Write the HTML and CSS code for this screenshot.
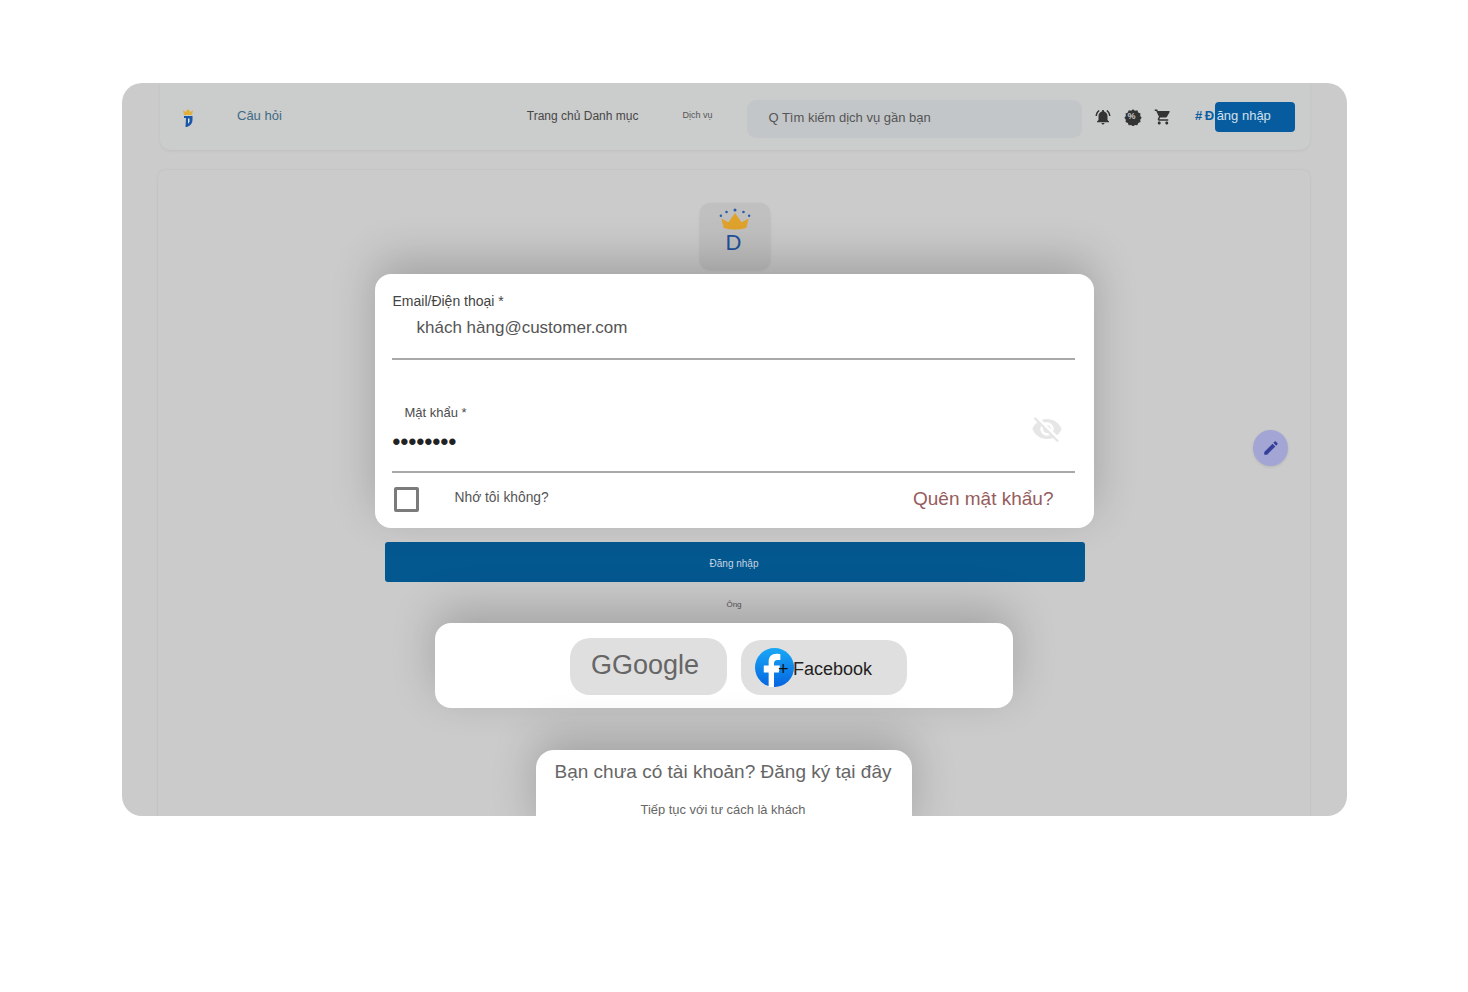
FILE: index.html
```html
<!DOCTYPE html>
<html lang="vi">

<head>
    <meta charset="UTF-8">
    <title>Đăng nhập</title>
    <link rel="stylesheet" href="styles.css">
</head>

<body>
    <div class="frame">
        <div class="nav">
            <svg class="nav-logo" viewBox="0 0 12 20">
                <path d="M2 7 1 2l2.500 2L6 1l2.500 3L11 2l-1 5z" fill="#e0b13c" />
                <path d="M2 8h8.500v4q0 5-5.500 7H3.500l.5-9H2z" fill="#1a58a5" />
                <path d="M6 10.500h1.500v3L6 16z" fill="#dfe4ea" />
            </svg>
            <span class="nav-faq">Câu hỏi</span>
            <span class="nav-home">Trang chủ Danh mục</span>
            <span class="nav-service">Dịch vụ</span>
            <div class="search">Q Tìm kiếm dịch vụ gần bạn</div>
            <svg class="nav-icon" viewBox="0 0 24 24">
                <path d="M7.580 4.080 6.150 2.650C3.750 4.480 2.170 7.300 2.030 10.500h2c.15-2.650 1.510-4.970 3.550-6.420zm12.390 6.420h2c-.15-3.200-1.730-6.020-4.120-7.850l-1.420 1.430c2.020 1.450 3.390 3.770 3.540 6.420zM18 11c0-3.070-1.640-5.640-4.500-6.320V4c0-.83-.67-1.500-1.500-1.500s-1.500.67-1.500 1.500v.68C7.630 5.360 6 7.920 6 11v5l-2 2v1h16v-1l-2-2v-5zm-6 11c.14 0 .27-.01.4-.04.65-.14 1.180-.58 1.440-1.180.1-.24.15-.5.15-.78h-4c.01 1.100.9 2 2.010 2z" />
            </svg>
            <div class="nav-badge">
                <svg class="nav-icon" viewBox="0 0 24 24">
                    <path d="m12 1.500 2.600 2 3.200-.4 1.200 3 3 1.200-.4 3.200 2 2.500-2 2.600.4 3.200-3 1.200-1.200 3-3.200-.4-2.600 2-2.500-2-3.200.4-1.200-3-3-1.200.4-3.200-2-2.600 2-2.500-.4-3.200 3-1.200 1.200-3 3.200.4z" />
                </svg>
                <span>%</span>
            </div>
            <svg class="nav-icon" viewBox="0 0 24 24">
                <path d="M7 18c-1.100 0-1.990.9-1.990 2S5.900 22 7 22s2-.9 2-2-.9-2-2-2zM1 2v2h2l3.600 7.590-1.350 2.450c-.16.28-.25.61-.25.96 0 1.100.9 2 2 2h12v-2H7.420c-.14 0-.25-.11-.25-.25l.03-.12.9-1.830h7.450c.75 0 1.410-.41 1.750-1.030l3.580-6.470c.08-.12.12-.28.12-.38 0-.55-.45-1-1-1H5.210l-.94-2H1zm16 16c-1.100 0-1.990.9-1.990 2s.89 2 1.990 2 2-.9 2-2-.9-2-2-2z" />
            </svg>
            <a class="nav-login"><span class="nav-hash">#Đ</span>ăng nhập</a>
        </div>

        <div class="panel">
            <div class="logo-tile">
                <svg class="crown" viewBox="0 0 34 24">
                    <path d="M5 21 2.500 11 10 15l7-10 7 10 7.500-4L29 21q-12 3.500-24 0z" fill="#e0a32c" />
                    <circle cx="17" cy="1.800" r="1.600" fill="#2a5da8" />
                    <circle cx="8" cy="4" r="1.400" fill="#2a5da8" />
                    <circle cx="26" cy="4" r="1.400" fill="#2a5da8" />
                    <circle cx="2" cy="8" r="1.300" fill="#2a5da8" />
                    <circle cx="32" cy="8" r="1.300" fill="#2a5da8" />
                </svg>
                <span class="logo-letter">D</span>
            </div>

            <form class="card login-card">
                <label class="email-label">Email/Điện thoại *</label>
                <div class="email-value">khách hàng@customer.com</div>
                <hr class="line">
                <label class="pass-label">Mật khẩu *</label>
                <div class="pass-row">
                    <span class="pass-dots">••••••••</span>
                    <svg class="eye" viewBox="0 0 24 24">
                        <path d="M12 7c2.760 0 5 2.240 5 5 0 .65-.13 1.260-.36 1.830l2.920 2.920c1.510-1.260 2.700-2.890 3.430-4.750-1.730-4.390-6-7.500-11-7.500-1.400 0-2.740.25-3.980.7l2.160 2.160C10.740 7.130 11.350 7 12 7zM2 4.270l2.280 2.280.46.46C3.080 8.300 1.780 10.020 1 12c1.730 4.390 6 7.500 11 7.500 1.550 0 3.030-.3 4.380-.84l.42.42L19.730 22 21 20.730 3.270 3 2 4.270zM7.530 9.800l1.550 1.550c-.05.21-.08.43-.08.65 0 1.660 1.340 3 3 3 .22 0 .44-.03.65-.08l1.550 1.550c-.67.33-1.410.53-2.200.53-2.760 0-5-2.240-5-5 0-.79.2-1.530.53-2.200zm4.310-.78 3.150 3.150.02-.16c0-1.660-1.340-3-3-3l-.17.01z" />
                    </svg>
                </div>
                <hr class="line">
                <div class="remember-row">
                    <span class="checkbox"></span>
                    <span class="remember">Nhớ tôi không?</span>
                    <a class="forgot">Quên mật khẩu?</a>
                </div>
            </form>

            <button class="submit">Đăng nhập</button>
            <div class="or-text">Ông</div>

            <div class="card social-card">
                <button class="social google">GGoogle</button>
                <button class="social facebook">
                    <svg class="fb" viewBox="0 0 40 40">
                        <defs>
                            <linearGradient id="fbblue" x1="0" y1="0" x2="0" y2="1">
                                <stop offset="0" stop-color="#19a8f6" />
                                <stop offset="1" stop-color="#0465e0" />
                            </linearGradient>
                        </defs>
                        <circle cx="20" cy="20" r="20" fill="url(#fbblue)" />
                        <path d="M14 40V25H9v-7h5v-4c0-5 3-8 8-8 2 0 4 .3 4 .3v6h-3c-2.500 0-3.500 1.500-3.500 3.200V18h6l-1 7h-5v15q-3 .5-5.500 0z" fill="#fff" />
                    </svg>
                    <span class="fb-plus">+</span>
                    <span class="fb-label">Facebook</span>
                </button>
            </div>

            <div class="card signup-card">
                <div class="signup">Bạn chưa có tài khoản? Đăng ký tại đây</div>
                <div class="guest">Tiếp tục với tư cách là khách</div>
            </div>
        </div>

        <button class="fab">
            <svg viewBox="0 0 24 24">
                <path d="M3 17.250V21h3.750L17.810 9.940l-3.750-3.750L3 17.250zM20.710 7.040c.39-.39.39-1.020 0-1.410l-2.340-2.340c-.39-.39-1.020-.39-1.410 0l-1.830 1.830 3.750 3.750 1.830-1.830z" />
            </svg>
        </button>
    </div>
</body>

</html>
```

FILE: styles.css
```css
* {
    margin: 0;
    padding: 0;
    box-sizing: border-box;
    font-family: "Liberation Sans", Arial, sans-serif;
}

body {
    background-color: #fff;
}

.frame {
    position: relative;
    width: 1225px;
    height: 733px;
    margin: 83px 0 0 122px;
    background-color: #cbcbcb;
    border-radius: 20px;
    overflow: hidden;
}

/* top bar */
.nav {
    display: flex;
    align-items: center;
    width: 1150px;
    height: 67px;
    margin-left: 38px;
    padding: 0 15px 0 22px;
    background-color: #cbcccc;
    border-radius: 0 0 10px 10px;
    box-shadow: 0 1px 3px rgba(0, 0, 0, 0.06);
}

.nav-logo {
    width: 12px;
    height: 20px;
    margin-top: 3px;
}

.nav-faq {
    margin: -2px 0 0 43px;
    font-size: 13px;
    color: #3f6a85;
}

.nav-home {
    margin: -2px 0 0 245px;
    font-size: 12px;
    color: #474747;
}

.nav-service {
    margin: -4px 0 0 44px;
    font-size: 9px;
    color: #555;
}

.search {
    display: flex;
    align-items: center;
    width: 335px;
    height: 38px;
    margin: 4px 12px 0 35px;
    padding: 0 0 2px 21px;
    font-size: 13px;
    color: #555;
    background-color: #c3c6c8;
    border-radius: 9px;
}

.nav-icon {
    display: block;
    width: 18px;
    height: 18px;
    fill: #333;
}

.nav-badge {
    position: relative;
    margin: 0 12px;
}

.nav-badge span {
    position: absolute;
    top: 3px;
    left: 3px;
    font-size: 9px;
    font-weight: 700;
    color: #cbcbcb;
}

.nav-login {
    display: block;
    width: 80px;
    height: 30px;
    margin: 1px 0 0 auto;
    font-size: 13px;
    line-height: 28px;
    text-indent: -20px;
    white-space: nowrap;
    color: #d3e0ea;
    background-color: #075c9f;
    border-radius: 4px;
}

.nav-hash {
    letter-spacing: 2.500px;
    font-weight: 700;
    color: #0a5da0;
}

/* main panel */
.panel {
    display: flex;
    flex-direction: column;
    align-items: center;
    width: 1152px;
    height: 660px;
    margin: 20px 0 0 36px;
    padding-top: 33px;
    background-color: #cbcbcb;
    border-radius: 8px 8px 0 0;
    box-shadow: 0 0 3px rgba(0, 0, 0, 0.08);
}

.panel > * {
    flex-shrink: 0;
}

.logo-tile {
    display: flex;
    flex-direction: column;
    align-items: center;
    width: 70px;
    height: 66px;
    margin: 0 0 5px 2px;
    padding-top: 5px;
    background-color: #c0c0c0;
    border-radius: 10px;
    box-shadow: 0 1px 3px rgba(0, 0, 0, 0.1);
}

.crown {
    width: 32px;
    height: 23px;
}

.logo-letter {
    margin: 0 0 0 -3px;
    font-size: 22px;
    line-height: 24px;
    color: #23509a;
}

.card {
    background-color: #fff;
    border-radius: 16px;
    box-shadow: 0 -14px 45px rgba(0, 0, 0, 0.2);
}

.login-card {
    position: relative;
    width: 719px;
    height: 254px;
    padding: 18px 19px 0 17px;
}

.email-label {
    display: block;
    margin-left: 1px;
    font-size: 14px;
    line-height: 18px;
    color: #444;
}

.email-value {
    margin: 7px 0 0 25px;
    font-size: 17px;
    line-height: 22px;
    color: #555;
}

.line {
    height: 2px;
    border: none;
    background-color: #a9a9a9;
}

.email-value + .line {
    margin-top: 19px;
}

.pass-label {
    display: block;
    margin: 45px 0 0 13px;
    font-size: 13px;
    line-height: 16px;
    color: #4c4c4c;
}

.pass-row {
    display: flex;
    align-items: center;
    justify-content: space-between;
    height: 50px;
    padding-right: 12px;
}

.pass-dots {
    margin: -9px 0 0 1px;
    font-size: 22px;
    line-height: 26px;
    letter-spacing: 0.300px;
    font-weight: 700;
    color: #222;
}

.eye {
    width: 32px;
    height: 32px;
    margin-top: -34px;
    fill: #e6e6e6;
}

.remember-row {
    display: flex;
    align-items: center;
    margin-top: 14px;
    padding-left: 2px;
}

.checkbox {
    width: 25px;
    height: 25px;
    border: 3px solid #7b7b7b;
    border-radius: 2px;
}

.remember {
    margin: -4px 0 0 36px;
    font-size: 13.800px;
    color: #555;
}

.forgot {
    margin: -2px 21px 0 auto;
    font-size: 19px;
    color: #955d5d;
}

.submit {
    width: 700px;
    height: 40px;
    margin: 14px 0 0 2px;
    padding: 2px 2px 0 0;
    font-size: 10px;
    color: #c6d4e0;
    background-color: #045890;
    border: none;
    border-radius: 3px;
}

.or-text {
    margin-top: 17px;
    font-size: 8px;
    line-height: 12px;
    color: #555;
}

.social-card {
    display: flex;
    justify-content: center;
    align-items: flex-start;
    gap: 14px;
    width: 578px;
    height: 85px;
    margin: 12px 20px 0 0;
    padding: 15px 0 0 29px;
}

.social {
    display: flex;
    align-items: center;
    background-color: #dfdfdf;
    border: none;
    border-radius: 20px;
}

.google {
    width: 157px;
    height: 57px;
    padding: 0 0 3px 21px;
    font-size: 27px;
    color: #666;
}

.facebook {
    position: relative;
    width: 166px;
    height: 55px;
    margin-top: 2px;
    padding-left: 14px;
    font-size: 18px;
    color: #222;
}

.fb {
    width: 39px;
    height: 39px;
    margin-right: -1px;
}

.fb-label {
    margin-top: 4px;
}

.fb-plus {
    position: absolute;
    left: 37px;
    top: 19px;
    font-size: 18px;
    color: #111;
}

.signup-card {
    width: 376px;
    height: 90px;
    margin: 42px 20px 0 0;
    padding-top: 10px;
    text-align: center;
    border-radius: 18px 18px 0 0;
}

.signup {
    margin-left: -2px;
    font-size: 19px;
    line-height: 24px;
    color: #666;
}

.guest {
    margin: 19px 0 0 -2px;
    font-size: 12.900px;
    line-height: 14px;
    color: #666;
}

.fab {
    position: absolute;
    top: 347px;
    left: 1131px;
    display: flex;
    align-items: center;
    justify-content: center;
    width: 35px;
    height: 36px;
    background-color: #a3a6d4;
    border: none;
    border-radius: 50%;
    box-shadow: 0 1px 3px rgba(0, 0, 0, 0.1);
}

.fab svg {
    width: 18px;
    height: 18px;
    fill: #34409a;
}
```
